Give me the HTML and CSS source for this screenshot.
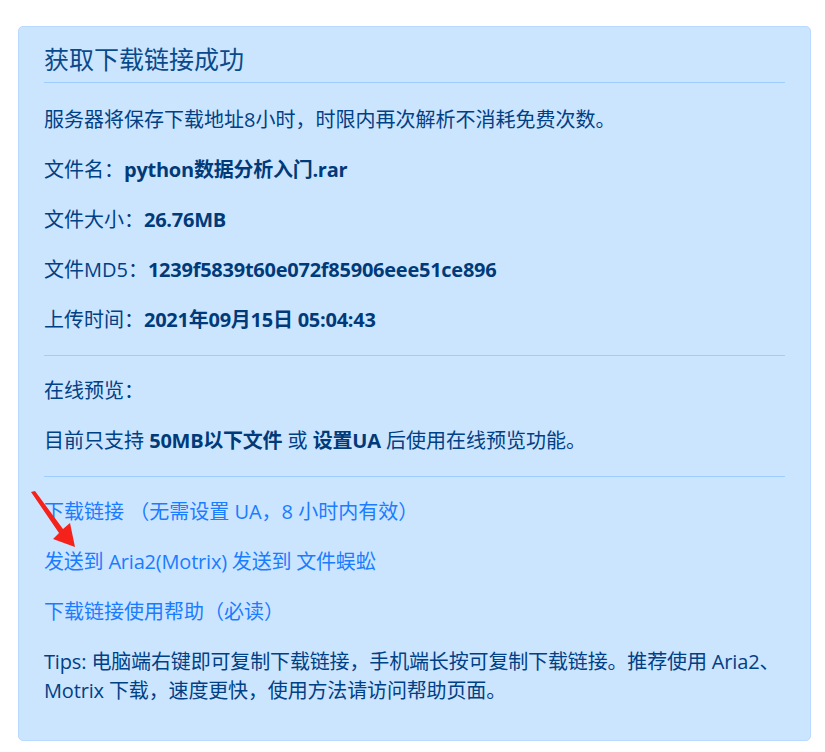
FILE: index.html
```html
<!DOCTYPE html>
<html lang="zh-CN">
<head>
    <meta charset="UTF-8">
    <title>获取下载链接成功</title>
    <link rel="stylesheet" href="styles.css">
</head>
<body>
<div class="wrap">
    <div class="alert">
        <h5 class="alert-heading">获取下载链接成功</h5>
        <hr class="first">
        <p>服务器将保存下载地址8小时，时限内再次解析不消耗免费次数。</p>
        <p>文件名：<b>python数据分析入门.rar</b></p>
        <p>文件大小：<b>26.76MB</b></p>
        <p>文件MD5：<b>1239f5839t60e072f85906eee51ce896</b></p>
        <p>上传时间：<b>2021年09月15日 05:04:43</b></p>
        <hr>
        <p>在线预览：</p>
        <p>目前只支持 <b>50MB以下文件</b> 或 <b>设置UA</b> 后使用在线预览功能。</p>
        <hr>
        <p><a href="#">下载链接</a> <a href="#">（无需设置 UA，8 小时内有效）</a></p>
        <p class="narrow"><a href="#">发送到 Aria2(Motrix)</a> <a href="#">发送到 文件蜈蚣</a></p>
        <p><a href="#">下载链接使用帮助（必读）</a></p>
        <p class="tips">Tips: 电脑端右键即可复制下载链接，手机端长按可复制下载链接。推荐使用 Aria2、Motrix 下载，速度更快，使用方法请访问帮助页面。</p>
    </div>
</div>
<!-- red annotation arrow -->
<svg class="arrow" width="825" height="752" viewBox="0 0 825 752">
    <polygon points="31,492 35,491 63,529 70,523 75,547 53,539 59,533" fill="#f5221b"/>
</svg>
</body>
</html>
```

FILE: styles.css
```css
*{
    margin: 0;
    padding: 0;
    box-sizing: border-box;
}
body{
    background-color: #fff;
    font-family: "Open Sans", "Noto Sans CJK SC", sans-serif;
    font-size: 20px;
    line-height: 30px;
    color: #004085;
}
.wrap{
    padding: 26px 14px 0 18px;
}
.alert{
    background-color: #cce5ff;
    border: 1px solid #b8daff;
    border-radius: 5px;
    padding: 15px 25px 15px;
}
.alert-heading{
    font-size: 25px;
    font-weight: normal;
    line-height: 34px;
    color: #0a4a8a;
}
hr{
    border: 0;
    border-top: 1px solid #9fcdff;
    margin: 20px 0;
}
hr.first{
    margin: 6px 0 22px;
}
p{
    margin-bottom: 20px;
}
b{
    font-weight: bold;
    color: #003a78;
    letter-spacing: -0.25px;
}
a{
    color: #1a7cff;
    text-decoration: none;
}
.narrow{
    letter-spacing: -0.2px;
}
.tips{
    line-height: 29px;
    letter-spacing: -0.15px;
}
.arrow{
    position: absolute;
    left: 0;
    top: 0;
    pointer-events: none;
}
```
